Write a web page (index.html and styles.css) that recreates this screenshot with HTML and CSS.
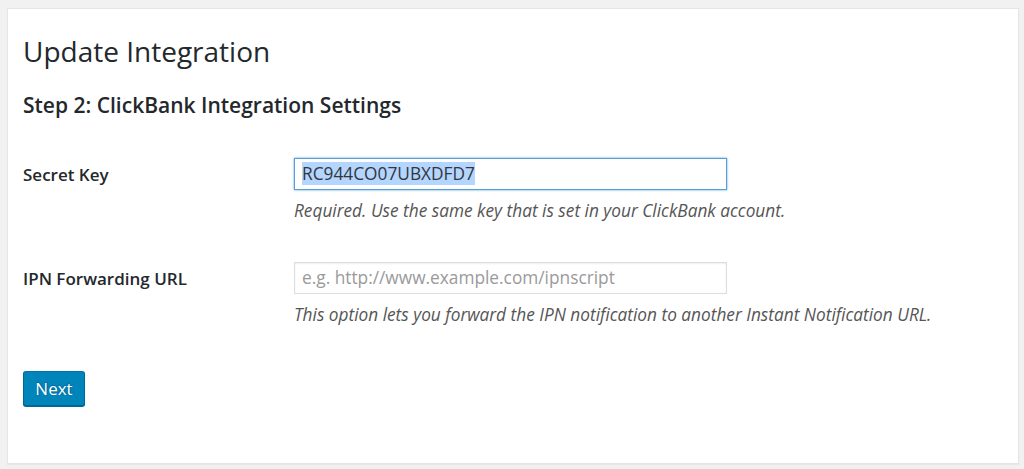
FILE: index.html
```html
<!DOCTYPE html>
<html>
<head>
<meta charset="utf-8">
<link rel="stylesheet" href="styles.css">
</head>
<body>
<div class="panel">
  <h1 class="title">Update Integration</h1>
  <h2 class="subtitle">Step 2: ClickBank Integration Settings</h2>
  <div class="form">
    <div class="row">
      <div class="label">Secret Key</div>
      <div class="field">
        <div class="input focused"><span class="sel">RC944CO07UBXDFD7</span></div>
        <p class="desc">Required. Use the same key that is set in your ClickBank account.</p>
      </div>
    </div>
    <div class="row">
      <div class="label">IPN Forwarding URL</div>
      <div class="field">
        <div class="input"><span class="ph">e.g. http://www.example.com/ipnscript</span></div>
        <p class="desc">This option lets you forward the IPN notification to another Instant Notification URL.</p>
      </div>
    </div>
  </div>
  <button class="btn">Next</button>
</div>
</body>
</html>
```
FILE: styles.css
```css
html, body { margin: 0; padding: 0; }
body {
  background: #f1f1f1;
  font-family: "Open Sans", "Liberation Sans", sans-serif;
  color: #23282d;
  padding: 8px 5px 4px 7px;
}
.panel {
  background: #fff;
  border: 1px solid #e5e5e5;
  box-shadow: 0 1px 1px rgba(0,0,0,.04);
  height: 456px;
  box-sizing: border-box;
  padding: 0 15px;
}
.title {
  font-size: 28px;
  font-weight: 400;
  margin: 0;
  padding-top: 24px;
  line-height: 36px;
}
.subtitle {
  font-size: 21px;
  font-weight: 600;
  margin: 0;
  padding-top: 22px;
  line-height: 28px;
}
.form { margin-top: 39px; }
.row { display: flex; }
.row + .row { margin-top: 40px; }
.label {
  width: 271px;
  flex: none;
  font-size: 17px;
  font-weight: 600;
  line-height: 22px;
  padding-top: 6px;
}
.field { flex: 1; }
.input {
  width: 433px;
  height: 32px;
  box-sizing: border-box;
  border: 1px solid #ddd;
  box-shadow: inset 0 1px 2px rgba(0,0,0,.07);
  padding: 0 7px;
  font-size: 17.3px;
  line-height: 30px;
  color: #32373c;
  white-space: nowrap;
  overflow: hidden;
}
.input.focused {
  border-color: #5b9dd9;
  box-shadow: 0 0 2px rgba(30,140,190,.8);
}
.sel { background: #b4d5fe; }
.ph { color: #9a9a9a; }
.desc {
  margin: 10px 0 0;
  font-size: 17.25px;
  font-style: italic;
  color: #555;
  line-height: 22px;
}
.btn {
  margin-top: 45px;
  background: #0085ba;
  border: 1px solid;
  border-color: #0073aa #006799 #006799;
  box-shadow: 0 1px 0 #006799;
  color: #fff;
  border-radius: 3px;
  font-family: "Open Sans", "Liberation Sans", sans-serif;
  font-size: 17px;
  height: 35px;
  width: 62px;
  padding: 0;
  text-shadow: 0 -1px 1px #006799, 1px 0 1px #006799;
}
```
